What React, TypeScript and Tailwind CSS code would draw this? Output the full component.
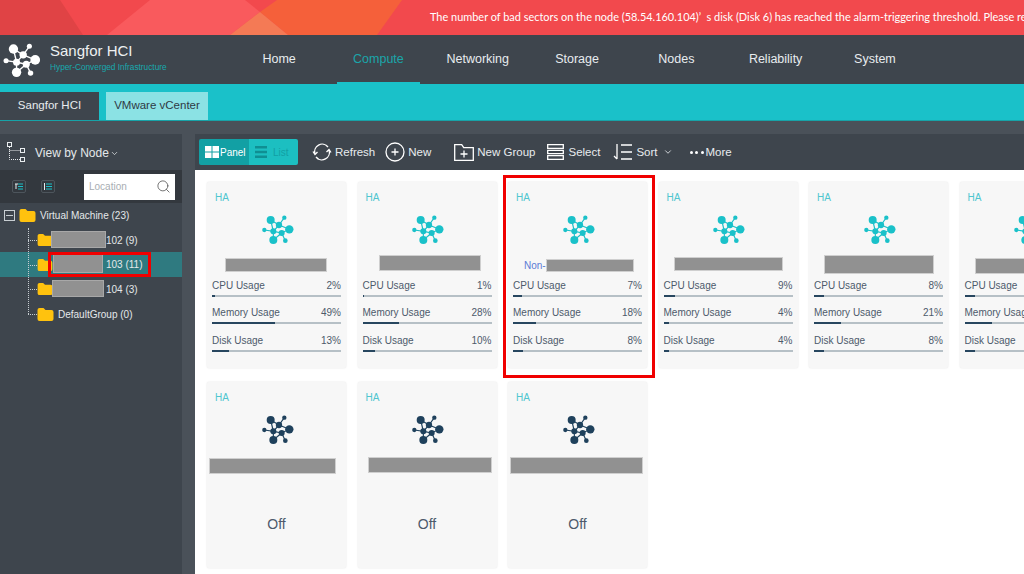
import { ChevronDown, Search } from 'lucide-react';

const navItems = ['Home', 'Compute', 'Networking', 'Storage', 'Nodes', 'Reliability', 'System'];

function NodeIcon({ className }: { className: string }) {
  return (
    <svg viewBox="180 120 108 90" className={className} fill="currentColor" stroke="currentColor">
      <g strokeWidth="3.5" fill="none">
        <path d="M212 138 L237 153 L253 131 M237 153 L268 166 M193 168 L220 172 L212 138 M220 172 L237 153 M220 172 L245 177 L268 166 M245 177 L220 198 L220 172 M245 177 L256 200" />
      </g>
      <g stroke="none">
        <circle cx="212" cy="138" r="12" />
        <circle cx="253" cy="131" r="6.5" />
        <circle cx="237" cy="153" r="9.5" />
        <circle cx="268" cy="166" r="12.5" />
        <circle cx="193" cy="168" r="6.5" />
        <circle cx="220" cy="172" r="9" />
        <circle cx="245" cy="177" r="9" />
        <circle cx="220" cy="198" r="12" />
        <circle cx="256" cy="200" r="7" />
      </g>
    </svg>
  );
}

function Folder({ className }: { className: string }) {
  return (
    <svg viewBox="0 0 16 13" className={className}>
      <path d="M0 2 Q0 0 2 0 H6 L8 2 H14 Q16 2 16 4 V11 Q16 13 14 13 H2 Q0 13 0 11 Z" fill="#ffc20e" />
    </svg>
  );
}

function Stat({ label, value }: { label: string; value: number }) {
  return (
    <div className="h-[27.3px]">
      <div className="flex justify-between text-[10px] leading-[14px] text-[#4d5a6b]">
        <span>{label}</span>
        <span>{value}%</span>
      </div>
      <div className="mt-[2px] h-[2px] bg-[#b6c0c6]">
        <div className="h-full bg-[#27465f]" style={{ width: `${value}%` }} />
      </div>
    </div>
  );
}

type CardData = {
  stats?: [number, number, number];
  redact: string;
  nonLabel?: boolean;
};

function Card({ stats, redact, nonLabel }: CardData) {
  return (
    <div className="relative h-[186px] w-[139px] shrink-0 rounded-[2px] bg-[#f7f7f7] px-[5px] pt-[9px] shadow-[0_0_2px_rgba(0,0,0,0.12)]">
      <div className="pl-[3px] text-[10px] leading-[14px] text-[#4fc6cf]">HA</div>
      <div className="mt-[9px] flex justify-center pl-[2px]">
        <NodeIcon className={stats ? 'h-[30px] w-[36px] text-[#1ac1c9]' : 'h-[30px] w-[36px] text-[#1f415c]'} />
      </div>
      {nonLabel && <span className="absolute left-[16px] top-[77px] text-[10px] leading-[14px] text-[#5b7bd5]">Non-</span>}
      <div className={`absolute border border-[#cfcfcf] bg-[#919191] ${redact}`} />
      {stats ? (
        <div className="mt-[35px]">
          <Stat label="CPU Usage" value={stats[0]} />
          <Stat label="Memory Usage" value={stats[1]} />
          <Stat label="Disk Usage" value={stats[2]} />
        </div>
      ) : (
        <div className="mt-[71px] text-center text-[14px] leading-[18px] text-[#4d5a6b]">Off</div>
      )}
    </div>
  );
}

function TreeRow({ label, selected, redact }: { label: string; selected?: boolean; redact?: string }) {
  return (
    <div className={`relative flex h-[24.7px] items-center pl-[37px] text-[10px] text-[#e4e8ea] ${selected ? 'bg-[#2f7a80]' : ''}`}>
      <span className="absolute left-[28px] top-1/2 w-[9px] border-t border-dotted border-[#c8ced2]" />
      <Folder className={redact ? 'h-[12px] w-[16px] shrink-0' : 'h-[13px] w-[17px] shrink-0'} />
      {redact && <div className={`absolute border border-[#a8a8a8] bg-[#919191] ${redact}`} />}
      <span className={redact ? 'ml-[53px]' : 'ml-[4px]'}>{label}</span>
    </div>
  );
}

function Toolbar() {
  return (
    <div className="flex h-[36px] items-center bg-[#3e454d] pl-[4px] text-[11.5px] text-[#e8ecef]">
      <div className="flex h-[26px] w-[99px] overflow-hidden rounded-[2px] text-[10px]">
        <div className="flex w-[50px] items-center gap-[1px] bg-[#12a0a4] pl-[6px] text-white">
          <svg viewBox="0 0 14 12" className="h-[12px] w-[14px]" fill="white">
            <path d="M0 0h6.5v5.5H0zM7.5 0H14v5.5H7.5zM0 6.5h6.5V12H0zM7.5 6.5H14V12H7.5z" />
          </svg>
          Panel
        </div>
        <div className="flex flex-1 items-center gap-[6px] bg-[#1cbfc1] pl-[6px] text-[#12a0a4]">
          <svg viewBox="0 0 12 12" className="h-[12px] w-[12px]" fill="#0f8f93">
            <path d="M0 0h12v2.5H0zM0 4.7h12v2.5H0zM0 9.5h12V12H0z" />
          </svg>
          List
        </div>
      </div>

      <svg viewBox="0 0 20 20" className="ml-[14px] h-[20px] w-[20px]" fill="none" stroke="white" strokeWidth="1.3">
        <path d="M3 12 A7.5 7.5 0 0 1 16 5 M17 8 A7.5 7.5 0 0 1 4 15" />
        <path d="M1 9.5 L3 12.5 L5.5 10 M19 10.5 L17 7.5 L14.5 10" />
      </svg>
      <span className="ml-[3px] mt-[1px]">Refresh</span>

      <svg viewBox="0 0 20 20" className="ml-[10px] h-[20px] w-[20px]" fill="none" stroke="white" strokeWidth="1.3">
        <circle cx="10" cy="10" r="9" />
        <path d="M6.5 10h7M10 6.5v7" />
      </svg>
      <span className="ml-[3px] mt-[1px]">New</span>

      <svg viewBox="0 0 20 17" className="ml-[23px] h-[17px] w-[20px]" fill="none" stroke="white" strokeWidth="1.3">
        <path d="M.7.7h7l2 3h9.6v12.6H.7z" />
        <path d="M6.5 10h7M10 6.5v7" />
      </svg>
      <span className="ml-[3px] mt-[1px]">New Group</span>

      <svg viewBox="0 0 17 16" className="ml-[12px] h-[16px] w-[17px]" fill="none" stroke="white" strokeWidth="1.3">
        <path d="M.7.7h15.6v3.6H.7zM.7 6.4h15.6v3.2H.7zM.7 11.7h15.6v3.6H.7z" />
      </svg>
      <span className="ml-[4px] mt-[1px]">Select</span>

      <svg viewBox="0 0 20 16" className="ml-[13px] h-[16px] w-[20px]" fill="none" stroke="white" strokeWidth="1.3">
        <path d="M4 0v15M1 12l3 3M8 1h11M8 8h11M8 15h11" />
      </svg>
      <span className="ml-[3px] mt-[1px]">Sort</span>
      <ChevronDown className="ml-[5px] h-[10px] w-[10px]" strokeWidth={2} />

      <span className="ml-[17px] flex gap-[2.5px]">
        <i className="block h-[3px] w-[3px] rounded-full bg-white" />
        <i className="block h-[3px] w-[3px] rounded-full bg-white" />
        <i className="block h-[3px] w-[3px] rounded-full bg-white" />
      </span>
      <span className="ml-[2px] mt-[1px]">More</span>
    </div>
  );
}

export default function App() {
  return (
    <div className="relative h-[574px] w-[1024px] overflow-hidden bg-white font-['Liberation_Sans',Arial,sans-serif]">
      {/* alarm banner */}
      <div className="relative h-[35px] overflow-hidden bg-[#f2494d]">
        <svg viewBox="0 0 420 35" className="absolute left-0 top-0 h-[35px] w-[420px]">
          <path d="M0 0H60L83 35H0z" fill="#e04345" />
          <path d="M60 0H245L260 12 230 35H107L150 0z" fill="#f95a5d" />
          <path d="M277 0H402L377 35H288L260 12z" fill="#f5603a" />
          <path d="M230 35L260 12 288 35z" fill="#f47a55" />
        </svg>
        <div className="absolute left-[430px] top-0 whitespace-nowrap text-[10.95px] font-['Lato',sans-serif] leading-[34px] text-white">
          The number of bad sectors on the node (58.54.160.104)’&nbsp;&nbsp;s disk (Disk 6) has reached the alarm-triggering threshold. Please rep
        </div>
      </div>

      {/* main nav */}
      <div className="flex h-[49px] bg-[#3e454d]">
        <div className="flex w-[229.5px] items-center pl-[1px]">
          <NodeIcon className="h-[35px] w-[42px] text-white" />
          <div className="ml-[7px] -mt-[6px]">
            <div className="text-[15px] leading-[18px] text-[#eef1f2]">Sangfor HCI</div>
            <div className="mt-[2px] text-[8.3px] leading-[10px] text-[#18a9ae]">Hyper-Converged Infrastructure</div>
          </div>
        </div>
        {navItems.map(item => (
          <div
            key={item}
            className={`relative flex w-[99.3px] items-center justify-center text-[12.5px] ${item === 'Compute' ? 'text-[#1aa5aa]' : 'text-[#e8ecef]'}`}
          >
            {item}
            {item === 'Compute' && <span className="absolute bottom-0 left-[8px] h-[2px] w-[83px] bg-[#1ac1c9]" />}
          </div>
        ))}
      </div>

      {/* tabs */}
      <div className="flex h-[37px] items-end gap-[7px] border-b border-[#17a3a8] bg-[#1ac1c9]">
        <div className="flex h-[28px] w-[99px] items-center justify-center bg-[#3e454d] text-[11.5px] text-[#e8ecef]">Sangfor HCI</div>
        <div className="flex h-[28px] w-[102px] items-center justify-center bg-[#8be2e4] text-[11.5px] text-[#2f3a44]">VMware vCenter</div>
      </div>

      <div className="flex h-[453px] bg-[#4a5159] pt-[13px]">
        {/* sidebar */}
        <div className="relative w-[182px] shrink-0 bg-[#3e454d]">
          <div className="flex h-[36px] items-center pl-[7px] text-[12px] text-[#e4e8ea]">
            <svg viewBox="0 0 18 20" className="h-[20px] w-[18px]" fill="none" stroke="#e8ecef">
              <rect x="0.5" y="0.5" width="4" height="4" fill="#3e454d" />
              <rect x="13.5" y="6.5" width="4" height="4" />
              <rect x="13.5" y="15.5" width="4" height="4" />
              <path d="M2.5 5V17.5H13M2.5 8.5H13" strokeDasharray="1 1" />
            </svg>
            <span className="ml-[10px] mt-[2px]">View by Node</span>
            <ChevronDown className="ml-[1px] mt-[2px] h-[9px] w-[9px]" strokeWidth={2} />
          </div>

          <div className="flex h-[33px] items-center bg-[#33383e] pl-[12px]">
            <div className="flex h-[13px] w-[14px] items-center justify-center rounded-[2px] border border-[#4d555c]">
              <svg viewBox="0 0 8 7" className="h-[7px] w-[8px]" fill="none" strokeWidth="1">
                <path d="M0 1h3M1 1v5" stroke="#e8ecef" />
                <path d="M3 1h5M3 3.5h5M3 6h5" stroke="#1ac1c9" />
              </svg>
            </div>
            <div className="ml-[15px] flex h-[13px] w-[14px] items-center justify-center rounded-[2px] border border-[#4d555c]">
              <svg viewBox="0 0 8 7" className="h-[7px] w-[8px]" fill="none" strokeWidth="1">
                <path d="M0.5 0v7" stroke="#e8ecef" />
                <path d="M2 1h6M2 3.5h6M2 6h6" stroke="#1ac1c9" />
              </svg>
            </div>
            <div className="ml-[29px] flex h-[26px] w-[91px] items-center justify-between bg-white pl-[5px] pr-[4px] text-[10px] text-[#a8adb2]">
              Location
              <Search className="h-[15px] w-[15px] text-[#555]" strokeWidth={1.3} />
            </div>
          </div>

          <div className="relative">
            <div className="flex h-[24.7px] items-center pl-[4px] text-[10px] text-[#e4e8ea]">
              <span className="flex h-[11px] w-[11px] items-center justify-center border border-[#c8ced2] bg-[#3e454d]">
                <span className="h-px w-[7px] bg-[#c8ced2]" />
              </span>
              <Folder className="ml-[4px] h-[13px] w-[17px]" />
              <span className="ml-[4px]">Virtual Machine (23)</span>
            </div>
            <span className="absolute bottom-[12px] left-[28px] top-[25px] z-10 border-l border-dotted border-[#c8ced2]" />
            <TreeRow label="102 (9)" redact="left-[51px] top-[3px] h-[17px] w-[55px]" />
            <TreeRow label="103 (11)" selected redact="left-[53px] top-[2px] h-[19px] w-[50px]" />
            <TreeRow label="104 (3)" redact="left-[52px] top-[3px] h-[17px] w-[52px]" />
            <TreeRow label="DefaultGroup (0)" />
          </div>
        </div>

        {/* content */}
        <div className="ml-[13px] flex-1 overflow-hidden">
          <Toolbar />
          <div className="h-[404px] bg-white pl-[12px] pt-[12px]">
            <div className="flex gap-[11.5px]">
              <Card stats={[2, 49, 13]} redact="left-[18px] top-[76px] h-[14px] w-[102px]" />
              <Card stats={[1, 28, 10]} redact="left-[21px] top-[73px] h-[16px] w-[102px]" />
              <Card stats={[7, 18, 8]} nonLabel redact="left-[38px] top-[77px] h-[13px] w-[88px]" />
              <Card stats={[9, 4, 4]} redact="left-[15px] top-[75px] h-[14px] w-[109px]" />
              <Card stats={[8, 21, 8]} redact="left-[15px] top-[73px] h-[19px] w-[110px]" />
              <Card stats={[8, 21, 8]} redact="left-[15px] top-[76px] h-[16px] w-[110px]" />
            </div>
            <div className="mt-[14px] flex gap-[11.5px]">
              <Card redact="left-[2px] top-[76px] h-[16px] w-[127px]" />
              <Card redact="left-[10px] top-[75px] h-[16px] w-[124px]" />
              <Card redact="left-[2px] top-[75px] h-[17px] w-[133px]" />
            </div>
          </div>
        </div>
      </div>

      {/* annotation boxes */}
      <div className="absolute left-[48px] top-[252px] h-[25px] w-[103px] border-[3px] border-[#f00000]" />
      <div className="absolute left-[503px] top-[175px] h-[203px] w-[152px] border-[3px] border-[#f00000]" />
    </div>
  );
}
